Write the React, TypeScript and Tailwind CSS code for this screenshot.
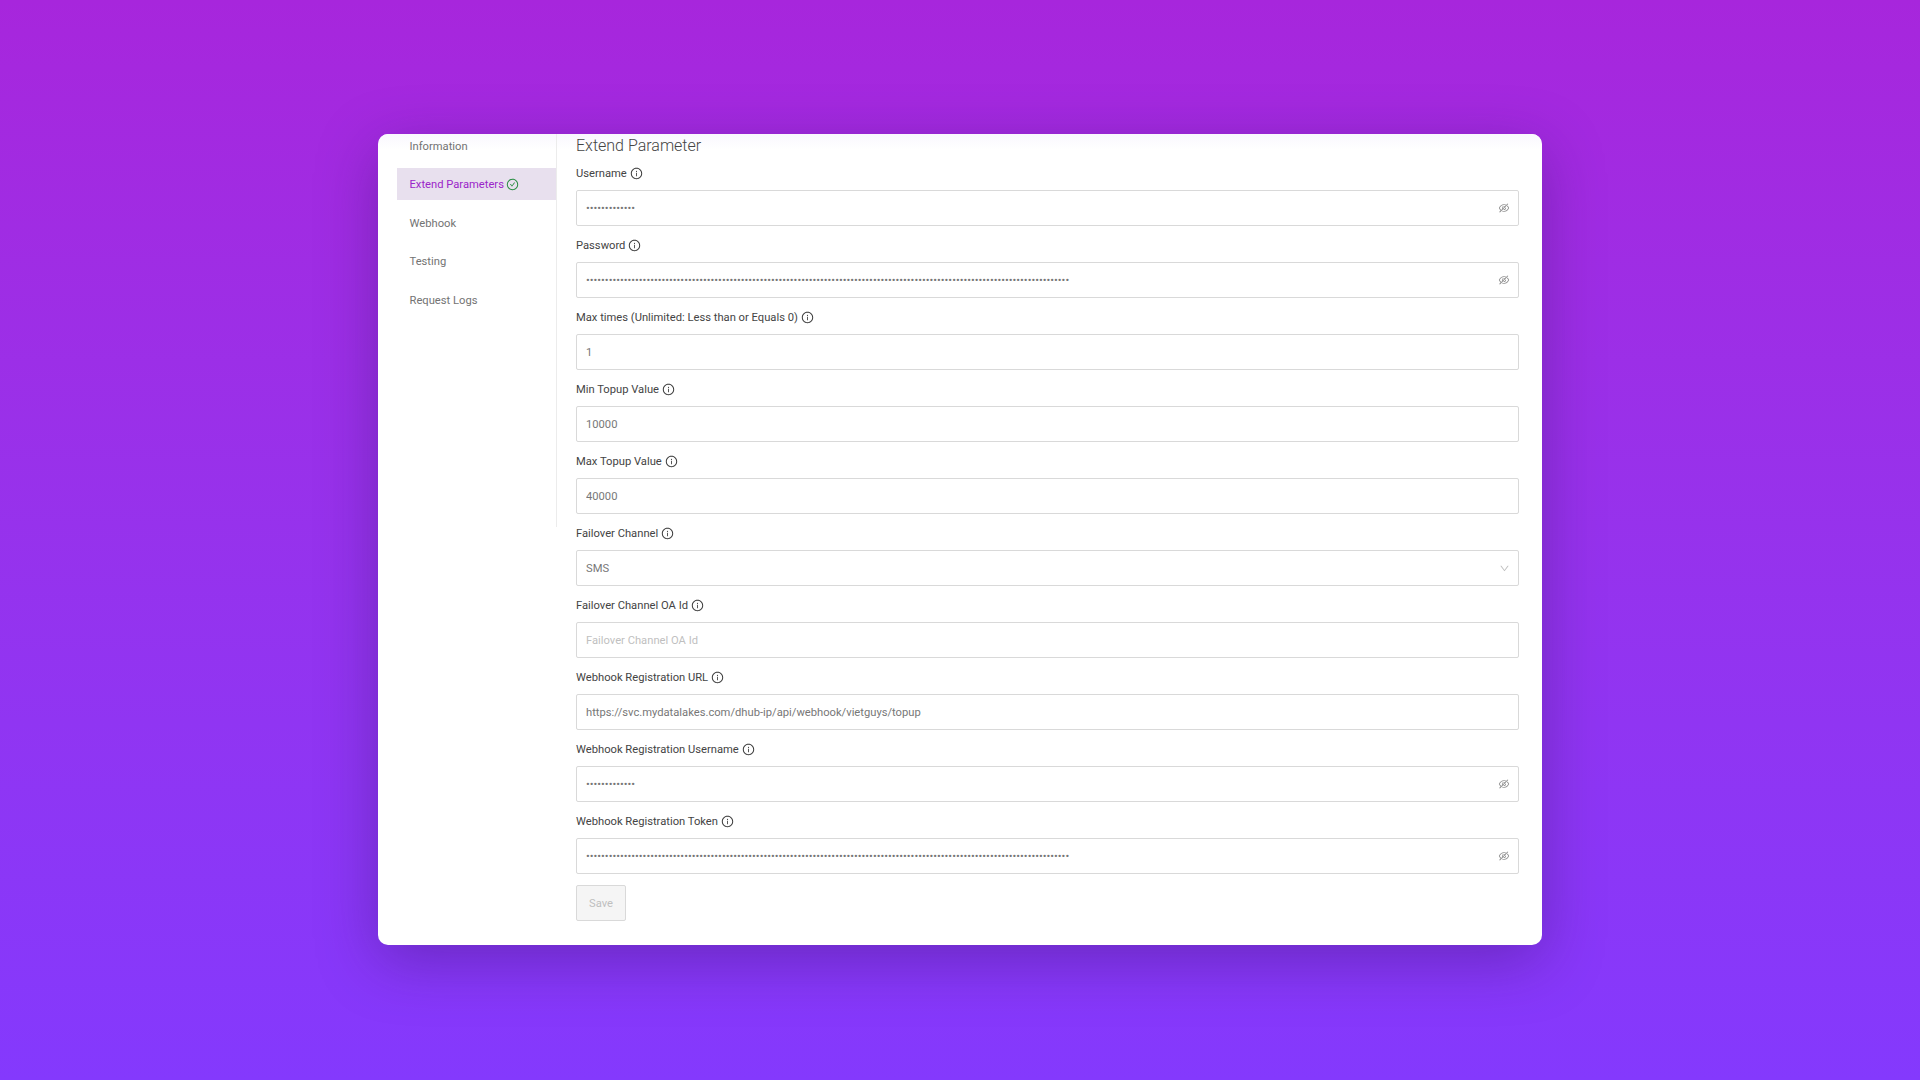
import React from 'react';
import { AiOutlineCheckCircle, AiOutlineDown, AiOutlineEyeInvisible, AiOutlineInfoCircle } from 'react-icons/ai';

type Field = {
  label: string;
  value?: string;
  placeholder?: string;
  kind?: 'password' | 'select';
};

const shortSecret = 'x'.repeat(13);
const longSecret = 'x'.repeat(128);

const fields: Field[] = [
  { label: 'Username', value: shortSecret, kind: 'password' },
  { label: 'Password', value: longSecret, kind: 'password' },
  { label: 'Max times (Unlimited: Less than or Equals 0)', value: '1' },
  { label: 'Min Topup Value', value: '10000' },
  { label: 'Max Topup Value', value: '40000' },
  { label: 'Failover Channel', value: 'SMS', kind: 'select' },
  { label: 'Failover Channel OA Id', placeholder: 'Failover Channel OA Id' },
  { label: 'Webhook Registration URL', value: 'https://svc.mydatalakes.com/dhub-ip/api/webhook/vietguys/topup' },
  { label: 'Webhook Registration Username', value: shortSecret, kind: 'password' },
  { label: 'Webhook Registration Token', value: longSecret, kind: 'password' },
];

const menu = ['Information', 'Extend Parameters', 'Webhook', 'Testing', 'Request Logs'];

function FormField({ field }: { field: Field }) {
  return (
    <div className="flex flex-col">
      <label className="flex h-[28px] items-center gap-[3px] pb-[4px] text-[11.2px] text-[#444]">
        {field.label}
        <AiOutlineInfoCircle className="-mt-[1px] h-[13px] w-[13px] text-[#333]" />
      </label>
      <div className="relative h-[36px] rounded-[2px] border border-[#d9d9d9] bg-white">
        {field.kind === 'select' ? (
          <div className="flex h-full items-center justify-between pl-[9px] pr-[8px] pt-[2px] text-[11.2px] text-[#777]">
            {field.value}
            <AiOutlineDown className="-mt-[2px] h-[11px] w-[11px] text-[#bfbfbf]" />
          </div>
        ) : (
          <input
            readOnly
            type={field.kind === 'password' ? 'password' : 'text'}
            value={field.value ?? ''}
            placeholder={field.placeholder}
            className="h-full w-full bg-transparent px-[9px] text-[11.2px] text-[#777] outline-none placeholder:text-[#bfbfbf]"
          />
        )}
        {field.kind === 'password' && (
          <AiOutlineEyeInvisible className="absolute right-[8px] top-[11px] h-[12px] w-[12px] text-[#8c8c8c]" />
        )}
      </div>
    </div>
  );
}

export default function App() {
  return (
    <div
      className="flex h-[1080px] items-start justify-center bg-gradient-to-b from-[#a726dc] to-[#8439fd] pt-[134px]"
      style={{ fontFamily: 'Roboto, sans-serif' }}
    >
      <div className="relative flex h-[811px] w-[1164px] overflow-hidden rounded-[10px] bg-white shadow-[0_16px_60px_rgba(60,20,110,0.4)]">
        <div className="pointer-events-none absolute inset-x-0 top-0 h-[16px] bg-gradient-to-b from-[#f9f7fe] to-transparent" />

        {/* sidebar */}
        <div className="relative ml-[19px] h-[393px] w-[160px] shrink-0 border-r border-[#ececec]">
          <ul className="-mt-[4px] flex flex-col gap-[6.4px]">
            {menu.map((item) => {
              const active = item === 'Extend Parameters';
              return (
                <li
                  key={item}
                  className={`flex h-[32px] items-center gap-[2px] pl-[12.5px] pt-[3px] text-[11.2px] ${
                    active ? 'bg-[#e8e0ee] text-[#9b26c9]' : 'text-[#737373]'
                  }`}
                >
                  {item}
                  {active && <AiOutlineCheckCircle className="-mt-[2px] h-[13px] w-[13px] text-[#1f8a3a]" />}
                </li>
              );
            })}
          </ul>
        </div>

        {/* form */}
        <div className="relative ml-[19px] w-[943px]">
          <h2 className="flex h-[28px] items-start pt-[3px] text-[16px] font-light leading-[18px] text-[#444]">Extend Parameter</h2>
          <div className="flex flex-col gap-[8px]">
            {fields.map((field) => (
              <FormField key={field.label} field={field} />
            ))}
          </div>
          <button
            disabled
            className="mt-[11px] h-[36px] w-[50px] rounded-[2px] border border-[#d9d9d9] bg-[#f5f5f5] pt-[2px] text-[11.2px] text-[#bfbfbf]"
          >
            Save
          </button>
        </div>
      </div>
    </div>
  );
}
